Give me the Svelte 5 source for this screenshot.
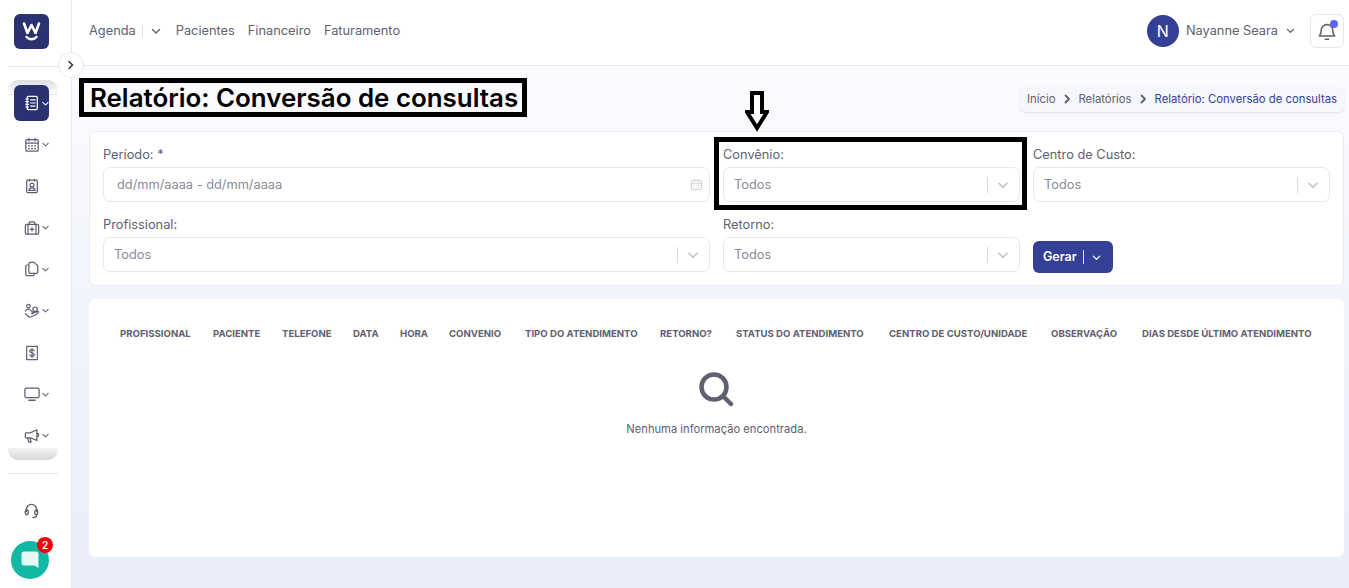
<script>
  const nav = ['Pacientes', 'Financeiro', 'Faturamento'];
  const columns = [
    ['PROFISSIONAL', 93], ['PACIENTE', 69], ['TELEFONE', 71], ['DATA', 47], ['HORA', 49], ['CONVENIO', 76],
    ['TIPO DO ATENDIMENTO', 135], ['RETORNO?', 76], ['STATUS DO ATENDIMENTO', 153], ['CENTRO DE CUSTO/UNIDADE', 162],
    ['OBSERVAÇÃO', 91], ['DIAS DESDE ÚLTIMO ATENDIMENTO', 175]
  ];
  const icons = [
    { k: 'book', c: true, a: true }, { k: 'cal', c: true }, { k: 'badge' }, { k: 'case', c: true },
    { k: 'files', c: true }, { k: 'hand', c: true }, { k: 'money' }, { k: 'screen', c: true }, { k: 'mega', c: true }
  ];
</script>

{#snippet chev(cls)}
  <svg class={cls} viewBox="0 0 12 12" fill="none" stroke="currentColor" stroke-width="1.4" stroke-linecap="round" stroke-linejoin="round"><path d="M2.5 4.5 6 8l3.5-3.5"/></svg>
{/snippet}

{#snippet crumbSep()}
  <svg class="csep" viewBox="0 0 8 10" fill="none" stroke="currentColor" stroke-width="1.8" stroke-linecap="round" stroke-linejoin="round"><path d="M2.500 1.500 6 5 2.500 8.500"/></svg>
{/snippet}

{#snippet select(label, cls)}
  <div class="field {cls || ''}">
    <span class="label">{label}</span>
    <div class="input">
      <span class="value">Todos</span>
      <i class="sep"></i>
      {@render chev('selchev')}
    </div>
  </div>
{/snippet}

<div class="shell">
  <aside class="side">
    <div class="logo">
      <svg viewBox="0 0 35 35" width="35" height="35" fill="none" stroke="#fff" stroke-linecap="round" stroke-linejoin="round"><path stroke-width="2.600" d="M10 9.500 13.500 19 17.500 11 21.500 19 25 9.500"/><path stroke-width="2.400" d="M12.500 23c2.500 3 7.500 3 10 0"/></svg>
    </div>
    <div class="side-rule"></div>
    <div class="fade top"></div>
    <div class="menu">
      {#each icons as it}
        <div class="item" class:active={it.a}>
          <svg class="ico" viewBox="0 0 18 18" fill="none" stroke="currentColor" stroke-width="1.4" stroke-linecap="round" stroke-linejoin="round">
            {#if it.k === 'book'}
              <rect x="3.500" y="1.500" width="11.500" height="15" rx="1.500"/><path d="M2 4.500h3M2 7.500h3M2 10.500h3M2 13.500h3M7.500 5.500h5M7.500 9h5M7.500 12.500h5"/>
            {:else if it.k === 'cal'}
              <rect x="2" y="3" width="14" height="13" rx="1.500"/><path d="M2 7h14M5.500 1.500v3M12.500 1.500v3M5 10h1M8.500 10h1M12 10h1M5 13h1M8.500 13h1M12 13h1"/>
            {:else if it.k === 'badge'}
              <rect x="3" y="2.500" width="12" height="14" rx="1.500"/><path d="M6 1.500v2M12 1.500v2"/><circle cx="9" cy="8" r="2.200"/><path d="M5.500 14c.3-2.400 1.800-3 3.500-3s3.200.6 3.500 3z"/>
            {:else if it.k === 'case'}
              <rect x="1.500" y="5" width="15" height="11" rx="1.500"/><path d="M6 5V3c0-.6.400-1 1-1h4c.6 0 1 .4 1 1v2M4.500 5v11M13.500 5v11M9 8.500v4M7 10.500h4"/>
            {:else if it.k === 'files'}
              <path d="M5 4.500H3.500C2.700 4.500 2 5.200 2 6v9c0 .8.700 1.500 1.500 1.500H10c.8 0 1.500-.7 1.500-1.500v-1"/><path d="M5.500 3c0-.8.700-1.500 1.500-1.500h4.500l4 4V12.500c0 .8-.7 1.500-1.500 1.500H7c-.8 0-1.500-.7-1.500-1.500z"/>
            {:else if it.k === 'hand'}
              <circle cx="5" cy="3.500" r="2"/><circle cx="12.500" cy="7" r="2.500"/><path d="M1.500 9c1.500-2.500 4-2.500 5.500-1l2.500 2c1 .9-.2 2-1.200 1.500M1.500 12l4.500 4 7-2.500 3.500-3.500c-1-1-2.200-.6-3.500.2L9 12"/>
            {:else if it.k === 'money'}
              <rect x="3" y="1.500" width="12" height="15" stroke-dasharray="1.200 .8"/><path d="M11.500 6.500C11 5.500 10 5.200 9 5.200c-1.300 0-2.500.6-2.500 1.800 0 2.500 5 1.300 5 3.800 0 1.200-1.200 1.900-2.500 1.900-1.100 0-2.100-.4-2.600-1.400M9 4v10"/>
            {:else if it.k === 'screen'}
              <rect x="1" y="2.500" width="16" height="10.500" rx="1.500"/><path d="M5.500 16h7" stroke-width="1.800"/>
            {:else if it.k === 'mega'}
              <path d="M1.500 6.500c0-.6.400-1 1-1H7L14.500 2v12L7 11H2.500c-.6 0-1-.4-1-1zM4 11l1.500 5H8L6.800 11M14.500 6c1.200 0 2 .8 2 2s-.8 2-2 2"/>
            {/if}
          </svg>
          {#if it.c}{@render chev('mchev')}{/if}
        </div>
      {/each}
    </div>
    <div class="fade bottom"></div>
    <div class="side-rule low"></div>
    <svg class="ico head" viewBox="0 0 18 18" fill="none" stroke="currentColor" stroke-width="1.500" stroke-linecap="round" stroke-linejoin="round"><path d="M3.500 10V8a5.500 5.500 0 0 1 11 0v2"/><rect x="2.500" y="8.500" width="3" height="5" rx="1.500"/><rect x="12.500" y="8.500" width="3" height="5" rx="1.500"/><path d="M14.500 13.500c0 2-1.500 3-4 3"/></svg>
    <button class="toggle" aria-label="Expandir">
      <svg viewBox="0 0 12 12" width="12" height="12" fill="none" stroke="#2a2f55" stroke-width="1.500" stroke-linecap="round" stroke-linejoin="round"><path d="M4 2.500 7.500 6 4 9.500"/></svg>
    </button>
    <div class="chat">
      <svg viewBox="0 0 20 20" width="20" height="20"><path fill="#e6f8f5" d="M4 1.500h12c1.500 0 2.500 1 2.500 2.500v14L14.500 15.500H4c-1.500 0-2.500-1-2.500-2.500V4C1.500 2.500 2.500 1.500 4 1.500z"/></svg>
      <span class="count">2</span>
    </div>
  </aside>

  <div class="main">
    <header class="top">
      <nav class="nav">
        <span class="agenda">Agenda<i></i>{@render chev('navchev')}</span>
        {#each nav as n}<span>{n}</span>{/each}
      </nav>
      <div class="user">
        <span class="avatar">N</span>
        <span class="uname">Nayanne Seara</span>
        {@render chev('uchev')}
        <span class="bell">
          <svg viewBox="0 0 20 20" width="22" height="22" fill="none" stroke="#5f6072" stroke-width="1.400" stroke-linecap="round" stroke-linejoin="round"><path d="M3 14.500c1.300-1.200 1.700-2.500 1.700-5a5.300 5.300 0 0 1 10.600 0c0 2.500.4 3.800 1.700 5z"/><path d="M8.500 17.500h3"/></svg>
          <i></i>
        </span>
      </div>
    </header>

    <main class="content">
      <div class="head-row">
        <h1>Relatório: Conversão de consultas</h1>
        <div class="crumbs">
          <span>Início</span>{@render crumbSep()}<span>Relatórios</span>{@render crumbSep()}<span class="cur">Relatório: Conversão de consultas</span>
        </div>
      </div>

      <section class="card filters">
        <div class="field span2">
          <span class="label">Período: *</span>
          <div class="input date">
            <span class="value">dd/mm/aaaa - dd/mm/aaaa</span>
            <svg class="calico" viewBox="0 0 14 14" fill="none" stroke="currentColor" stroke-width="1"><rect x="1.500" y="2.500" width="11" height="10" rx="1"/><path d="M1.500 5.500h11M4.500 1v2.500M9.500 1v2.500M4 8h1M6.500 8h1M9 8h1M4 10.500h1M6.500 10.500h1M9 10.500h1"/></svg>
          </div>
        </div>
        {@render select('Convênio:')}
        {@render select('Centro de Custo:')}
        {@render select('Profissional:', 'span2')}
        {@render select('Retorno:')}
        <div class="actions">
          <button class="gerar"><span class="glabel">Gerar</span><i></i>{@render chev('gchev')}</button>
        </div>
      </section>

      <section class="card results">
        <div class="thead">
          {#each columns as [c, w]}<span style="width:{w}px">{c}</span>{/each}
        </div>
        <div class="empty">
          <svg viewBox="0 0 36 36" width="36" height="36" fill="none" stroke="#5f6072" stroke-linecap="round"><circle cx="16" cy="16" r="12.500" stroke-width="4.500"/><path d="M26 26l7 7" stroke-width="4.500"/></svg>
          <p>Nenhuma informação encontrada.</p>
        </div>
      </section>
    </main>
  </div>

  <div class="mark title-mark"></div>
  <div class="mark field-mark"></div>
  <svg class="arrow" viewBox="0 0 24 43" width="24" height="43"><path fill="#fff" stroke="#000" stroke-width="4" d="M7 2h10v19h5L12 37 2 21h5z"/></svg>
</div>

<style>
  :global(body) { margin: 0; font-family: Inter, "Liberation Sans", sans-serif; background: #fff; }
  .shell { position: relative; display: flex; width: 1349px; height: 588px; overflow: hidden; }
  .side { position: relative; flex: 0 0 72px; height: 588px; box-sizing: border-box; background: #fff; border-right: 1px solid #e6e8ef; display: flex; flex-direction: column; align-items: flex-start; padding: 14px 0 0 8px; color: #5f6072; }
  .logo { width: 35px; height: 35px; margin-left: 6px; border-radius: 6px; background: #2a3272; }
  .side-rule { width: 50px; height: 1px; background: #e6e8ef; margin-top: 17px; }
  .side-rule.low { margin-top: 13px; }
  .fade { width: 50px; }
  .fade.top { margin-top: 13px; height: 15px; margin-bottom: -10px; border-radius: 10px 10px 0 0; background: linear-gradient(#dcdde0, #fff); }
  .fade.bottom { height: 12px; border-radius: 0 0 10px 10px; background: linear-gradient(#f4f4f5, #d6d7da); margin-top: -6px; }
  .menu { display: flex; flex-direction: column; gap: 5.600px; margin-left: 6px; }
  .item { width: 35px; height: 36px; display: flex; align-items: center; padding-left: 10px; box-sizing: border-box; border-radius: 6px; color: #5f6072; }
  .item.active { background: #2a3272; color: #fff; }
  .ico { width: 16px; height: 16px; flex: none; }
  .mchev { width: 9px; height: 9px; margin-left: 1px; flex: none; }
  .head { margin: 28px 0 0 15px; width: 17px; height: 17px; }
  .toggle { position: absolute; left: 58px; top: 52px; width: 26px; height: 26px; padding: 0; border-radius: 50%; background: #fff; border: 1px solid #e6e8ef; display: flex; align-items: center; justify-content: center; z-index: 3; }
  .chat { position: absolute; left: 11px; top: 541px; width: 38px; height: 38px; border-radius: 50%; background: #13b8a4; display: flex; align-items: center; justify-content: center; }
  .count { position: absolute; left: 26px; top: -4px; width: 16px; height: 16px; border-radius: 50%; background: #f2000f; color: #fff; font-size: 10px; font-weight: 600; line-height: 16px; text-align: center; }

  .main { flex: 1; min-width: 0; display: flex; flex-direction: column; }
  .top { box-sizing: border-box; height: 66px; flex: none; border-bottom: 1px solid #e6e8ef; background: #fff; display: flex; align-items: center; justify-content: space-between; padding: 0 5px 4px 17px; }
  .nav { display: flex; gap: 13px; font-size: 12.800px; color: #5f6072; }
  .agenda { display: flex; align-items: center; }
  .agenda i { width: 1px; height: 12px; background: #dcdde4; margin: 0 6px; }
  .navchev { width: 12px; height: 12px; margin-left: 1px; margin-right: 1px; }
  .user { display: flex; align-items: center; color: #5f6072; }
  .avatar { width: 32px; height: 32px; border-radius: 50%; background: #343f96; color: #fff; display: flex; align-items: center; justify-content: center; font-size: 16px; }
  .uname { font-size: 12.800px; margin-left: 7px; }
  .uchev { width: 11px; height: 11px; margin-left: 7px; }
  .bell { position: relative; width: 34px; height: 34px; box-sizing: border-box; border: 1px solid #e6e8ef; border-radius: 6px; margin-left: 14px; display: flex; align-items: center; justify-content: center; }
  .bell i { position: absolute; right: 5px; top: 5px; width: 8px; height: 8px; border-radius: 50%; background: #5d62f5; }

  .content { flex: 1; padding: 0 5px 0 17px; background: linear-gradient(#fafbfe, #e9edfa); }
  .head-row { display: flex; justify-content: space-between; align-items: center; height: 65px; }
  h1 { margin: 0 0 2px 1px; font-size: 25.900px; font-weight: 600; color: #000; line-height: 30px; }
  .crumbs { display: flex; align-items: center; height: 25px; padding: 0 7px; margin-top: 1px; background: #f6f7fb; border-radius: 6px; box-shadow: 0 1px 2px rgba(40,45,80,.12); font-size: 11.300px; color: #5f6072; }
  .csep { width: 8px; height: 10px; margin: 0 7.500px; }
  .cur { color: #343f96; }
  .card { background: #fff; border-radius: 6px; }
  .filters { box-sizing: border-box; height: 155px; border: 1px solid #e9ebf2; padding: 14px 13px 0; display: grid; grid-template-columns: repeat(4, 297px); grid-auto-rows: 70px; column-gap: 13px; }
  .span2 { grid-column: span 2; }
  .field { display: flex; flex-direction: column; }
  .label { font-size: 12.800px; line-height: 18px; margin-bottom: 3px; color: #5f6072; }
  .input { box-sizing: border-box; height: 35px; border: 1px solid #e6e8ef; border-radius: 7px; display: flex; align-items: center; padding: 0 9px 0 10px; background: #fff; color: #8a8b99; font-size: 12.800px; }
  .input.date { padding: 0 6px 0 13px; }
  .value { flex: 1; margin-bottom: 1px; }
  .sep { width: 1px; height: 16px; background: #d8d9df; margin-right: 8px; }
  .selchev { width: 14px; height: 14px; color: #c4c5cc; }
  .calico { width: 13px; height: 13px; color: #c9cad2; }
  .actions { display: flex; align-items: flex-start; padding-top: 5px; margin-top: 20px; }
  .gerar { height: 32px; width: 80px; padding: 0 0 0 10px; box-sizing: border-box; border: 0; border-radius: 6px; background: #343f96; color: #fff; font: 600 12.500px Inter, sans-serif; display: flex; align-items: center; }
  .glabel { margin-top: -2px; }
  .gerar i { width: 1px; height: 14px; background: #dfe1f3; margin: 0 6px; }
  .gchev { width: 11px; height: 11px; margin-left: 1px; }
  .results { margin-top: 13px; height: 258px; overflow: hidden; }
  .thead { display: flex; padding: 29px 0 0 31px; font-size: 9.600px; font-weight: 700; color: #5f6072; white-space: nowrap; line-height: 12px; }
  .thead span { flex: none; }
  .empty { display: flex; flex-direction: column; align-items: center; padding-top: 31px; }
  .empty svg { margin-left: -1px; }
  .empty p { margin: 15px 0 0; font-size: 11.200px; line-height: 14px; color: #5f6072; }

  .mark { position: absolute; box-sizing: border-box; border: 5px solid #000; pointer-events: none; }
  .title-mark { left: 79px; top: 78px; width: 448px; height: 39px; }
  .field-mark { left: 714px; top: 137px; width: 313px; height: 73px; }
  .arrow { position: absolute; left: 745px; top: 91px; }
</style>
